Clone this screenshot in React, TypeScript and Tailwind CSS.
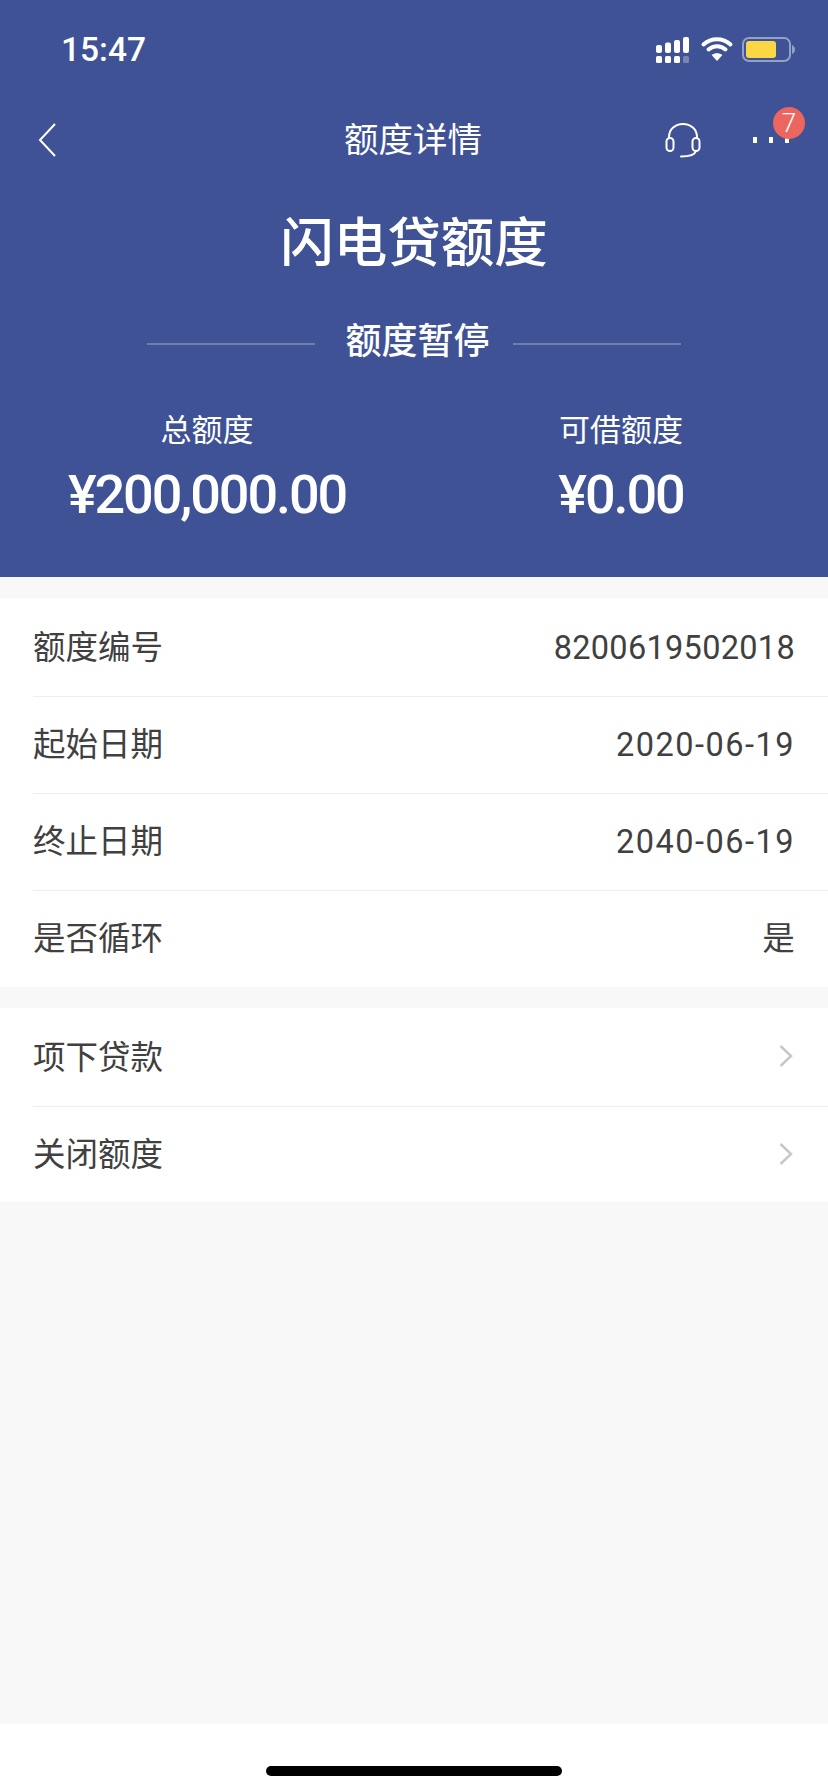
const CJK = "font-['Roboto','Noto_Sans_CJK_SC',sans-serif]";

const infoRows = [
  { label: "额度编号", value: "8200619502018", wide: false },
  { label: "起始日期", value: "2020-06-19", wide: true },
  { label: "终止日期", value: "2040-06-19", wide: true },
  { label: "是否循环", value: "是", wide: false },
];

const linkRows = ["项下贷款", "关闭额度"];

const StatusIcons = () => (
  <svg width="139" height="26" viewBox="0 0 139 26" fill="none">
    {/* signal */}
    <rect x="0" y="8" width="6" height="8" rx="2" fill="#fff" />
    <rect x="9" y="5.5" width="6" height="10.5" rx="2" fill="#fff" />
    <rect x="18" y="3" width="6" height="13" rx="2" fill="#fff" />
    <rect x="27" y="0" width="6" height="16" rx="2" fill="#fff" />
    <rect x="0" y="19" width="6" height="7" rx="1.5" fill="#fff" />
    <rect x="9" y="19" width="6" height="7" rx="1.5" fill="#fff" />
    <rect x="18" y="19" width="6" height="7" rx="1.5" fill="#fff" />
    <rect x="27" y="19" width="6" height="7" rx="1.5" fill="#fff" fillOpacity="0.3" />
    {/* wifi */}
    <path d="M47.5 7.5C55 0.5 67 0.5 74.5 7.5" stroke="#fff" strokeWidth="4" strokeLinecap="round" />
    <path d="M52.5 12.5C57.5 8 64.5 8 69.5 12.5" stroke="#fff" strokeWidth="4" strokeLinecap="round" />
    <path d="M61 24L55.6 18C58.7 15.5 63.3 15.5 66.4 18Z" fill="#fff" />
    {/* battery */}
    <rect x="87" y="1" width="47" height="23" rx="6" stroke="#fff" strokeOpacity="0.45" strokeWidth="2" />
    <rect x="90" y="4" width="30" height="17" rx="3" fill="#fbd745" />
    <path d="M136 8C138 9 139 10.500 139 12.500C139 14.500 138 16 136 17Z" fill="#fff" fillOpacity="0.45" />
  </svg>
);

const HeadsetIcon = () => (
  <svg width="36" height="36" viewBox="0 0 36 36" fill="none" stroke="#fff" strokeWidth="2">
    <path d="M4 16V15C4 7.300 10.300 2 18 2C25.700 2 32 7.300 32 15V16" />
    <rect x="1.500" y="16" width="7" height="13" rx="3.500" />
    <rect x="27.500" y="16" width="7" height="13" rx="3.500" />
    <path d="M31 29C30 32.500 25 34.500 16 34.500" strokeLinecap="round" />
  </svg>
);

const Chevron = () => (
  <svg className="mb-1 mr-px" width="16" height="24" viewBox="0 0 16 24" fill="none" stroke="#c8c8c8" strokeWidth="2.500">
    <path d="M2.500 2L13 12L2.500 22" />
  </svg>
);

const App = () => {
  return (
    <div className={`${CJK} flex min-h-[1792px] w-[828px] flex-col bg-[#f8f8f8]`}>
      <header className="h-[577px] bg-[#3f5296] text-white">
        <div className="flex h-[88px] items-end justify-between pb-[25px] pl-[61px] pr-[33px]">
          <span className="text-[33.5px] font-medium leading-[26px]">15:47</span>
          <StatusIcons />
        </div>

        <div className="relative flex h-[104px] items-center justify-between pl-[38px] pr-[39px]">
          <svg width="18" height="34" viewBox="0 0 18 34" fill="none" stroke="#fff" strokeWidth="2">
            <path d="M17 1L2 17L17 33" />
          </svg>
          <h1 className="absolute left-[344px] text-[34.5px] font-normal leading-none">额度详情</h1>
          <div className="flex items-center gap-[52px]">
            <HeadsetIcon />
            <div className="relative flex gap-3">
              <span className="h-1.5 w-1 bg-white" />
              <span className="h-1.5 w-1 bg-white" />
              <span className="h-1.5 w-1 bg-white" />
              <span className="absolute -right-[16px] -top-[30px] flex h-8 w-8 items-center justify-center rounded-full bg-[#ec6660] text-[26px] font-light leading-none">
                7
              </span>
            </div>
          </div>
        </div>

        <div className="mt-[18px] text-center text-[53.5px] font-medium leading-[68px]">闪电贷额度</div>

        <div className="mt-[42px] flex h-[44px] items-center justify-center">
          <span className="mt-1 h-[2px] w-[168px] bg-white/25" />
          <span className="w-[198px] pl-[7px] text-center text-[36px] font-medium leading-none">额度暂停</span>
          <span className="mt-1 h-[2px] w-[168px] bg-white/25" />
        </div>

        <div className="mt-[49px] grid grid-cols-2 text-center">
          <div>
            <div className="text-[31px] font-normal leading-[36px]">总额度</div>
            <div className="mt-[18px] text-[54px] font-medium leading-[56px] tracking-[-2.1px]">¥200,000.00</div>
          </div>
          <div>
            <div className="text-[31px] font-normal leading-[36px]">可借额度</div>
            <div className="mt-[18px] text-[54px] font-medium leading-[56px] tracking-[-2.1px]">¥0.00</div>
          </div>
        </div>
      </header>

      <section className="mt-[21px] h-[389px] bg-white pl-[33px] pt-[2px]">
        {infoRows.map((row, i) => (
          <div
            key={row.label}
            className={`flex h-[97px] items-center justify-between pr-[33px] text-[32.5px] text-[#404040] ${
              i < infoRows.length - 1 ? "border-b border-[#eeeeee]" : ""
            }`}
          >
            <span>{row.label}</span>
            <span className={row.wide ? "tracking-[1.5px]" : "tracking-[0.3px]"}>{row.value}</span>
          </div>
        ))}
      </section>

      <section className="mt-[21px] h-[194px] bg-white pl-[33px] pt-[2px]">
        {linkRows.map((label, i) => (
          <div
            key={label}
            className={`flex h-[97px] items-center justify-between pr-[33px] text-[32.5px] text-[#404040] ${
              i === 0 ? "border-b border-[#eeeeee]" : ""
            }`}
          >
            <span>{label}</span>
            <Chevron />
          </div>
        ))}
      </section>

      <div className="flex-1" />

      <footer className="flex h-[68px] items-end justify-center bg-white pb-[16px]">
        <span className="h-[10px] w-[296px] rounded-full bg-black" />
      </footer>
    </div>
  );
};

export default App;
